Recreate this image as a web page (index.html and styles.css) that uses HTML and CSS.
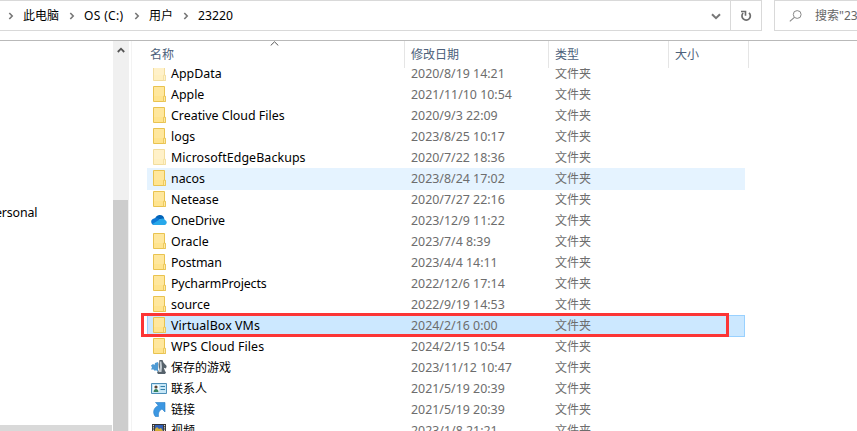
FILE: index.html
```
<!DOCTYPE html>
<html lang="zh-CN">
<head>
<meta charset="utf-8">
<title>23220</title>
<link rel="stylesheet" href="styles.css">
</head>
<body>
<svg width="0" height="0" class="defs">
  <symbol id="folder" viewBox="0 0 16 16">
    <path d="M2.500.5h11v9.500l.9.600v4.900H2.500z" fill="#ffe48f" stroke="#e9c350"/>
    <path d="M3 1h10v9H3z" fill="#ffe79d"/>
    <path d="M12.500 15.500v-5.200h2v5.200z" fill="#ffeaa6" stroke="#e9c350" stroke-width=".8"/>
  </symbol>
  <symbol id="chev" viewBox="0 0 6 8"><path d="M1.300 1 4.200 4 1.300 7" fill="none" stroke="#777" stroke-width="1.600"/></symbol>
</svg>
<header class="toolbar">
  <div class="address">
    <svg class="chev"><use href="#chev"/></svg><span class="crumb c1">此电脑</span>
    <svg class="chev"><use href="#chev"/></svg><span class="crumb c2">OS (C:)</span>
    <svg class="chev"><use href="#chev"/></svg><span class="crumb c3">用户</span>
    <svg class="chev"><use href="#chev"/></svg><span class="crumb c4">23220</span>
    <svg class="drop" viewBox="0 0 10 7"><path d="m1 1.200 4 4 4-4" fill="none" stroke="#777" stroke-width="2"/></svg>
    <div class="refresh"><svg viewBox="0 0 12 12"><path d="M9 2.800A4.200 4.200 0 1 1 3.100 3" fill="none" stroke="#6d6d6d" stroke-width="1.700"/><path d="M1 1.500h4.500v4.300" fill="none" stroke="#6d6d6d" stroke-width="1.600"/></svg></div>
  </div>
  <div class="search">
    <svg viewBox="0 0 13 12"><circle cx="8.200" cy="4.500" r="3.900" fill="none" stroke="#888"/><path d="M5.400 7.300.8 11.400" stroke="#888" stroke-width="1.100"/></svg>
    <span>搜索"23220"</span>
  </div>
</header>
<main class="body">
  <nav class="tree"><span class="tree-item">ersonal</span><div class="tree-sel"></div></nav>
  <div class="scroll">
    <svg viewBox="0 0 8 6"><path d="m.8 5 3.200-3.300L7.200 5" fill="none" stroke="#555" stroke-width="1.800"/></svg>
    <div class="thumb"></div>
  </div>
  <section class="files">
    <div class="head">
      <div class="h-name">名称<svg class="sort" viewBox="0 0 9 5"><path d="M.7 4.500 4.500.8l3.800 3.700" fill="none" stroke="#555"/></svg></div>
      <div class="h-date">修改日期</div><div class="h-type">类型</div><div class="h-size">大小</div>
    </div>
    <div class="clip"><div class="rows">
      <div class="row faded"><svg class="icon"><use href="#folder"/></svg><span class="name">AppData</span><span class="date">2020/8/19 14:21</span><span class="type">文件夹</span></div>
      <div class="row"><svg class="icon"><use href="#folder"/></svg><span class="name">Apple</span><span class="date">2021/11/10 10:54</span><span class="type">文件夹</span></div>
      <div class="row"><svg class="icon"><use href="#folder"/></svg><span class="name">Creative Cloud Files</span><span class="date">2020/9/3 22:09</span><span class="type">文件夹</span></div>
      <div class="row"><svg class="icon"><use href="#folder"/></svg><span class="name">logs</span><span class="date">2023/8/25 10:17</span><span class="type">文件夹</span></div>
      <div class="row faded"><svg class="icon"><use href="#folder"/></svg><span class="name loose">MicrosoftEdgeBackups</span><span class="date">2020/7/22 18:36</span><span class="type">文件夹</span></div>
      <div class="row hover"><svg class="icon"><use href="#folder"/></svg><span class="name">nacos</span><span class="date">2023/8/24 17:02</span><span class="type">文件夹</span></div>
      <div class="row"><svg class="icon"><use href="#folder"/></svg><span class="name">Netease</span><span class="date">2020/7/27 22:16</span><span class="type">文件夹</span></div>
      <div class="row"><svg class="icon" viewBox="0 0 16 16"><path d="M4 7.500C4.500 4 7 3 9 3c2.300 0 4 1.500 4.300 4z" fill="#0364b8"/><path d="M3.500 13C-1 12.500-.7 7 3 6.500c2-1.500 4-.8 5.500.7L12 12z" fill="#0f78d4"/><path d="M3 13c-.8-.3-1.300-.6-1.600-1L9.500 7c2-1 4.200-.5 4.500 1 2.300.7 2.500 4.500-.5 5z" fill="#28a8ea"/></svg><span class="name tight">OneDrive</span><span class="date">2023/12/9 11:22</span><span class="type">文件夹</span></div>
      <div class="row"><svg class="icon"><use href="#folder"/></svg><span class="name">Oracle</span><span class="date">2023/7/4 8:39</span><span class="type">文件夹</span></div>
      <div class="row"><svg class="icon"><use href="#folder"/></svg><span class="name tight">Postman</span><span class="date">2023/4/4 14:11</span><span class="type">文件夹</span></div>
      <div class="row"><svg class="icon"><use href="#folder"/></svg><span class="name tight">PycharmProjects</span><span class="date">2022/12/6 17:14</span><span class="type">文件夹</span></div>
      <div class="row"><svg class="icon"><use href="#folder"/></svg><span class="name">source</span><span class="date">2022/9/19 14:53</span><span class="type">文件夹</span></div>
      <div class="row selected"><svg class="icon"><use href="#folder"/></svg><span class="name loose">VirtualBox VMs</span><span class="date">2024/2/16 0:00</span><span class="type">文件夹</span><div class="mark"></div></div>
      <div class="row"><svg class="icon"><use href="#folder"/></svg><span class="name loose">WPS Cloud Files</span><span class="date">2024/2/15 10:54</span><span class="type">文件夹</span></div>
      <div class="row"><svg class="icon" viewBox="0 0 16 16"><path d="M0 6.500 2 5l1.500 1L4 4l3-1v10l-2-2-1 1-1.500-1.500L0 10.500 1 8.500z" fill="#4f9ad3"/><path d="M8.500 1h3l1 2.500L15.700 7l-.7 2.500-2.200-.8L14 12l1 1.500-1 1.500H7l-1-1.500L8 11 7.500 5z" fill="#56626b"/><path d="M8.600 2.500 9 8l-1.500 5h3L11 8l-.6-5.500z" fill="#c4cdd3"/></svg><span class="name zh">保存的游戏</span><span class="date">2023/11/12 10:47</span><span class="type">文件夹</span></div>
      <div class="row"><svg class="icon" viewBox="0 0 16 16"><path d="M.5 3.500h15v10H.5z" fill="#c7e7f7" stroke="#4d8fb8"/><path d="M2 5h6v7H2z" fill="#f4fbff"/><circle cx="5" cy="7" r="1.600" fill="#5b4635"/><path d="M2.500 12c0-4 5-4 5 0z" fill="#35845f"/><path d="M9.500 6.500H14M9.500 9.500H14" stroke="#367faa"/></svg><span class="name zh">联系人</span><span class="date">2021/5/19 20:39</span><span class="type">文件夹</span></div>
      <div class="row"><svg class="icon" viewBox="0 0 16 16"><path d="M4.500 1.500H14V11l-3-3c-3 1.500-4 4-3.500 7.500H4.300C1 11 3 6.500 7.300 4.400z" fill="#3c97e2" stroke="#287fc8" stroke-width=".6"/></svg><span class="name zh">链接</span><span class="date">2021/5/19 20:39</span><span class="type">文件夹</span></div>
      <div class="row"><svg class="icon" viewBox="0 0 16 16"><path d="M1 2h14v14H1z" fill="#333"/><path d="M4 3h8v6H4z" fill="#315fb5"/><path d="M4 7l2-2 2 2 2-1 2 3H4z" fill="#d2ac36"/><path d="M2.500 3v13M13.500 3v13" stroke="#ddd" stroke-width="1.200" stroke-dasharray="1.300 1"/></svg><span class="name zh">视频</span><span class="date">2023/1/8 21:21</span><span class="type">文件夹</span></div>
    </div></div>
  </section>
</main>
</body>
</html>
```
FILE: styles.css
```
* { box-sizing: border-box; }
body { margin: 0; width: 857px; height: 431px; overflow: hidden; background: #fff; color: #000; font: 12.4px/21px "Noto Sans", "Noto Sans CJK SC", sans-serif; display: flex; flex-direction: column; }
svg { flex: none; display: block; }
.defs { position: absolute; }
.toolbar { height: 41px; flex: none; display: flex; gap: 12px; border-bottom: 1px solid #b9b9b9; }
.address { width: 762px; height: 31px; border: 1px solid #d9d9d9; border-left: 0; display: flex; align-items: center; padding-left: 8px; }
.chev { width: 6px; height: 8px; margin-right: 9px; }
.crumb { white-space: nowrap; font-size: 12px; }
.c1 { width: 46px; }
.c2 { width: 50px; letter-spacing: .35px; }
.c3 { width: 34px; }
.drop { width: 10px; height: 7px; margin: 1px 9px 0 auto; }
.refresh { width: 31px; height: 29px; border-left: 1px solid #d9d9d9; display: flex; align-items: center; justify-content: center; }
.refresh svg { width: 12px; height: 12px; }
.c4 { font-size: 12.2px; }
.search { width: 83px; height: 31px; border: 1px solid #d9d9d9; border-right: 0; display: flex; align-items: center; padding-left: 14px; gap: 13px; color: #666; overflow: hidden; white-space: nowrap; font-size: 12px; }
.search svg { width: 13px; height: 12px; }
.body { display: flex; flex: 1; min-height: 0; }
.tree { width: 113px; display: flex; flex-direction: column; justify-content: space-between; padding-top: 161px; }
.tree-item { margin-left: -5px; letter-spacing: -.15px; }
.tree-sel { height: 6px; width: 112px; background: #d9d9d9; }
.scroll { width: 19px; background: #f0f0f0; border-right: 1px solid #f3f3f3; box-shadow: inset -2px 0 #fff; display: flex; flex-direction: column; justify-content: space-between; }
.scroll svg { width: 8px; height: 6px; margin: 6px 0 0 4px; }
.thumb { width: 15px; height: 231px; background: #cdcdcd; }
.files { flex: 1; display: flex; flex-direction: column; min-width: 0; }
.head { height: 27px; flex: none; display: grid; grid-template-columns: 273px 144px 120px 80px; color: #4c607a; font-size: 12px; line-height: 27px; }
.head > div { border-right: 1px solid #e5e5e5; padding-left: 6px; }
.head .h-name { padding-left: 18px; position: relative; }
.sort { position: absolute; left: 138px; top: 0; width: 9px; height: 5px; }
.clip { flex: 1; min-height: 0; overflow: hidden; }
.rows { margin-top: -5px; }
.row { height: 22px; margin: 0 0 -1px 15px; width: 598px; display: grid; grid-template-columns: 20px 240px 144px 1fr; padding-left: 4px; align-items: center; position: relative; white-space: nowrap; line-height: 22px; }
.icon { width: 16px; height: 16px; margin-top: -2px; }
.faded .icon { opacity: .55; }
.date, .type { color: #6d6d6d; }
.type, .zh { font-size: 12px; }
.loose { letter-spacing: .09px; }
.tight { letter-spacing: -.13px; }
.hover { background: #e5f3ff; }
.selected { background: #cce8ff; box-shadow: inset 0 0 0 1px #99d1ff; }
.mark { position: absolute; left: -6px; top: -2px; width: 588px; height: 24px; border: 3px solid #fc3535; }
```
